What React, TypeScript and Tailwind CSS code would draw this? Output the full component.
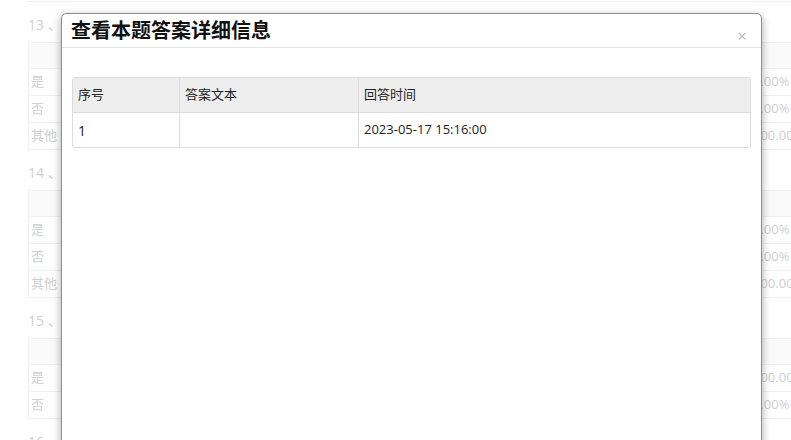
import React from "react";

type Section = { no: number; title: string; rows: { label: string; pct: string }[] };

const sections: Section[] = [
  {
    no: 13,
    title: "您是否愿意参加本次活动",
    rows: [
      { label: "是", pct: "0.00%" },
      { label: "否", pct: "0.00%" },
      { label: "其他", pct: "100.00%" },
    ],
  },
  {
    no: 14,
    title: "您是否了解相关内容",
    rows: [
      { label: "是", pct: "0.00%" },
      { label: "否", pct: "0.00%" },
      { label: "其他", pct: "100.00%" },
    ],
  },
  {
    no: 15,
    title: "是否需要后续联系",
    rows: [
      { label: "是", pct: "100.00%" },
      { label: "否", pct: "0.00%" },
    ],
  },
];

const font = { fontFamily: '"Open Sans", "Noto Sans CJK SC", sans-serif' };

const BackgroundPage = () => (
  <div className="w-[860px] pl-[28px] text-[13px] text-[#cfcfcf]">
    <div className="h-[2px] border-b border-[#f0f0f0]" />
    {sections.map((s) => (
      <div key={s.no}>
        <div className="pt-[14px] pb-[8px] leading-[18px] text-[14px]">
          {s.no} 、{s.title}
        </div>
        <div className="border-l border-[#f0f0f0]">
          <div className="h-[27px] bg-[#fafafa] border-y border-[#f0f0f0]" />
          {s.rows.map((r) => (
            <div key={r.label} className="flex h-[27px] items-center border-b border-[#f0f0f0]">
              <span className="w-[724px] pl-[2px]">{r.label}</span>
              <span>{r.pct}</span>
            </div>
          ))}
        </div>
      </div>
    ))}
    <div className="pt-[14px] leading-[18px] text-[14px]">16 、请留下您的建议</div>
  </div>
);

const AnswerModal = () => (
  <div className="absolute left-[61px] top-[13px] w-[701px] h-[460px] bg-white border border-[#8f8f8f] rounded-t-[5px] shadow-[0_3px_9px_rgba(0,0,0,0.35)]">
    <div className="relative h-[34px] border-b border-[#e5e5e5] px-[9px] flex items-center">
      <h3 className="text-[20px] font-bold text-[#111] leading-none">查看本题答案详细信息</h3>
      <span className="absolute right-[14px] top-[13px] text-[17px] leading-none text-[#bbb]">×</span>
    </div>
    <div className="pt-[29px] px-[10px]">
      <div className="border border-[#dcdcdc] rounded-[3px] overflow-hidden text-[13px] text-[#222]">
        <div className="flex h-[35px] bg-[#eeeeee] border-b border-[#dcdcdc]">
          <div className="w-[107px] border-r border-[#dcdcdc] pl-[5px] flex items-center">序号</div>
          <div className="w-[179px] border-r border-[#dcdcdc] pl-[5px] flex items-center">答案文本</div>
          <div className="flex-1 pl-[5px] flex items-center">回答时间</div>
        </div>
        <div className="flex h-[34px] text-[#222]">
          <div className="w-[107px] border-r border-[#dcdcdc] pl-[5px] flex items-center text-[14px] text-[#222]">1</div>
          <div className="w-[179px] border-r border-[#dcdcdc] pl-[5px] flex items-center"></div>
          <div className="flex-1 pl-[5px] flex items-center text-[#222]">2023-05-17 15:16:00</div>
        </div>
      </div>
    </div>
  </div>
);

export default function App() {
  return (
    <div className="relative w-[791px] h-[440px] overflow-hidden bg-white" style={font}>
      <BackgroundPage />
      <AnswerModal />
    </div>
  );
}
